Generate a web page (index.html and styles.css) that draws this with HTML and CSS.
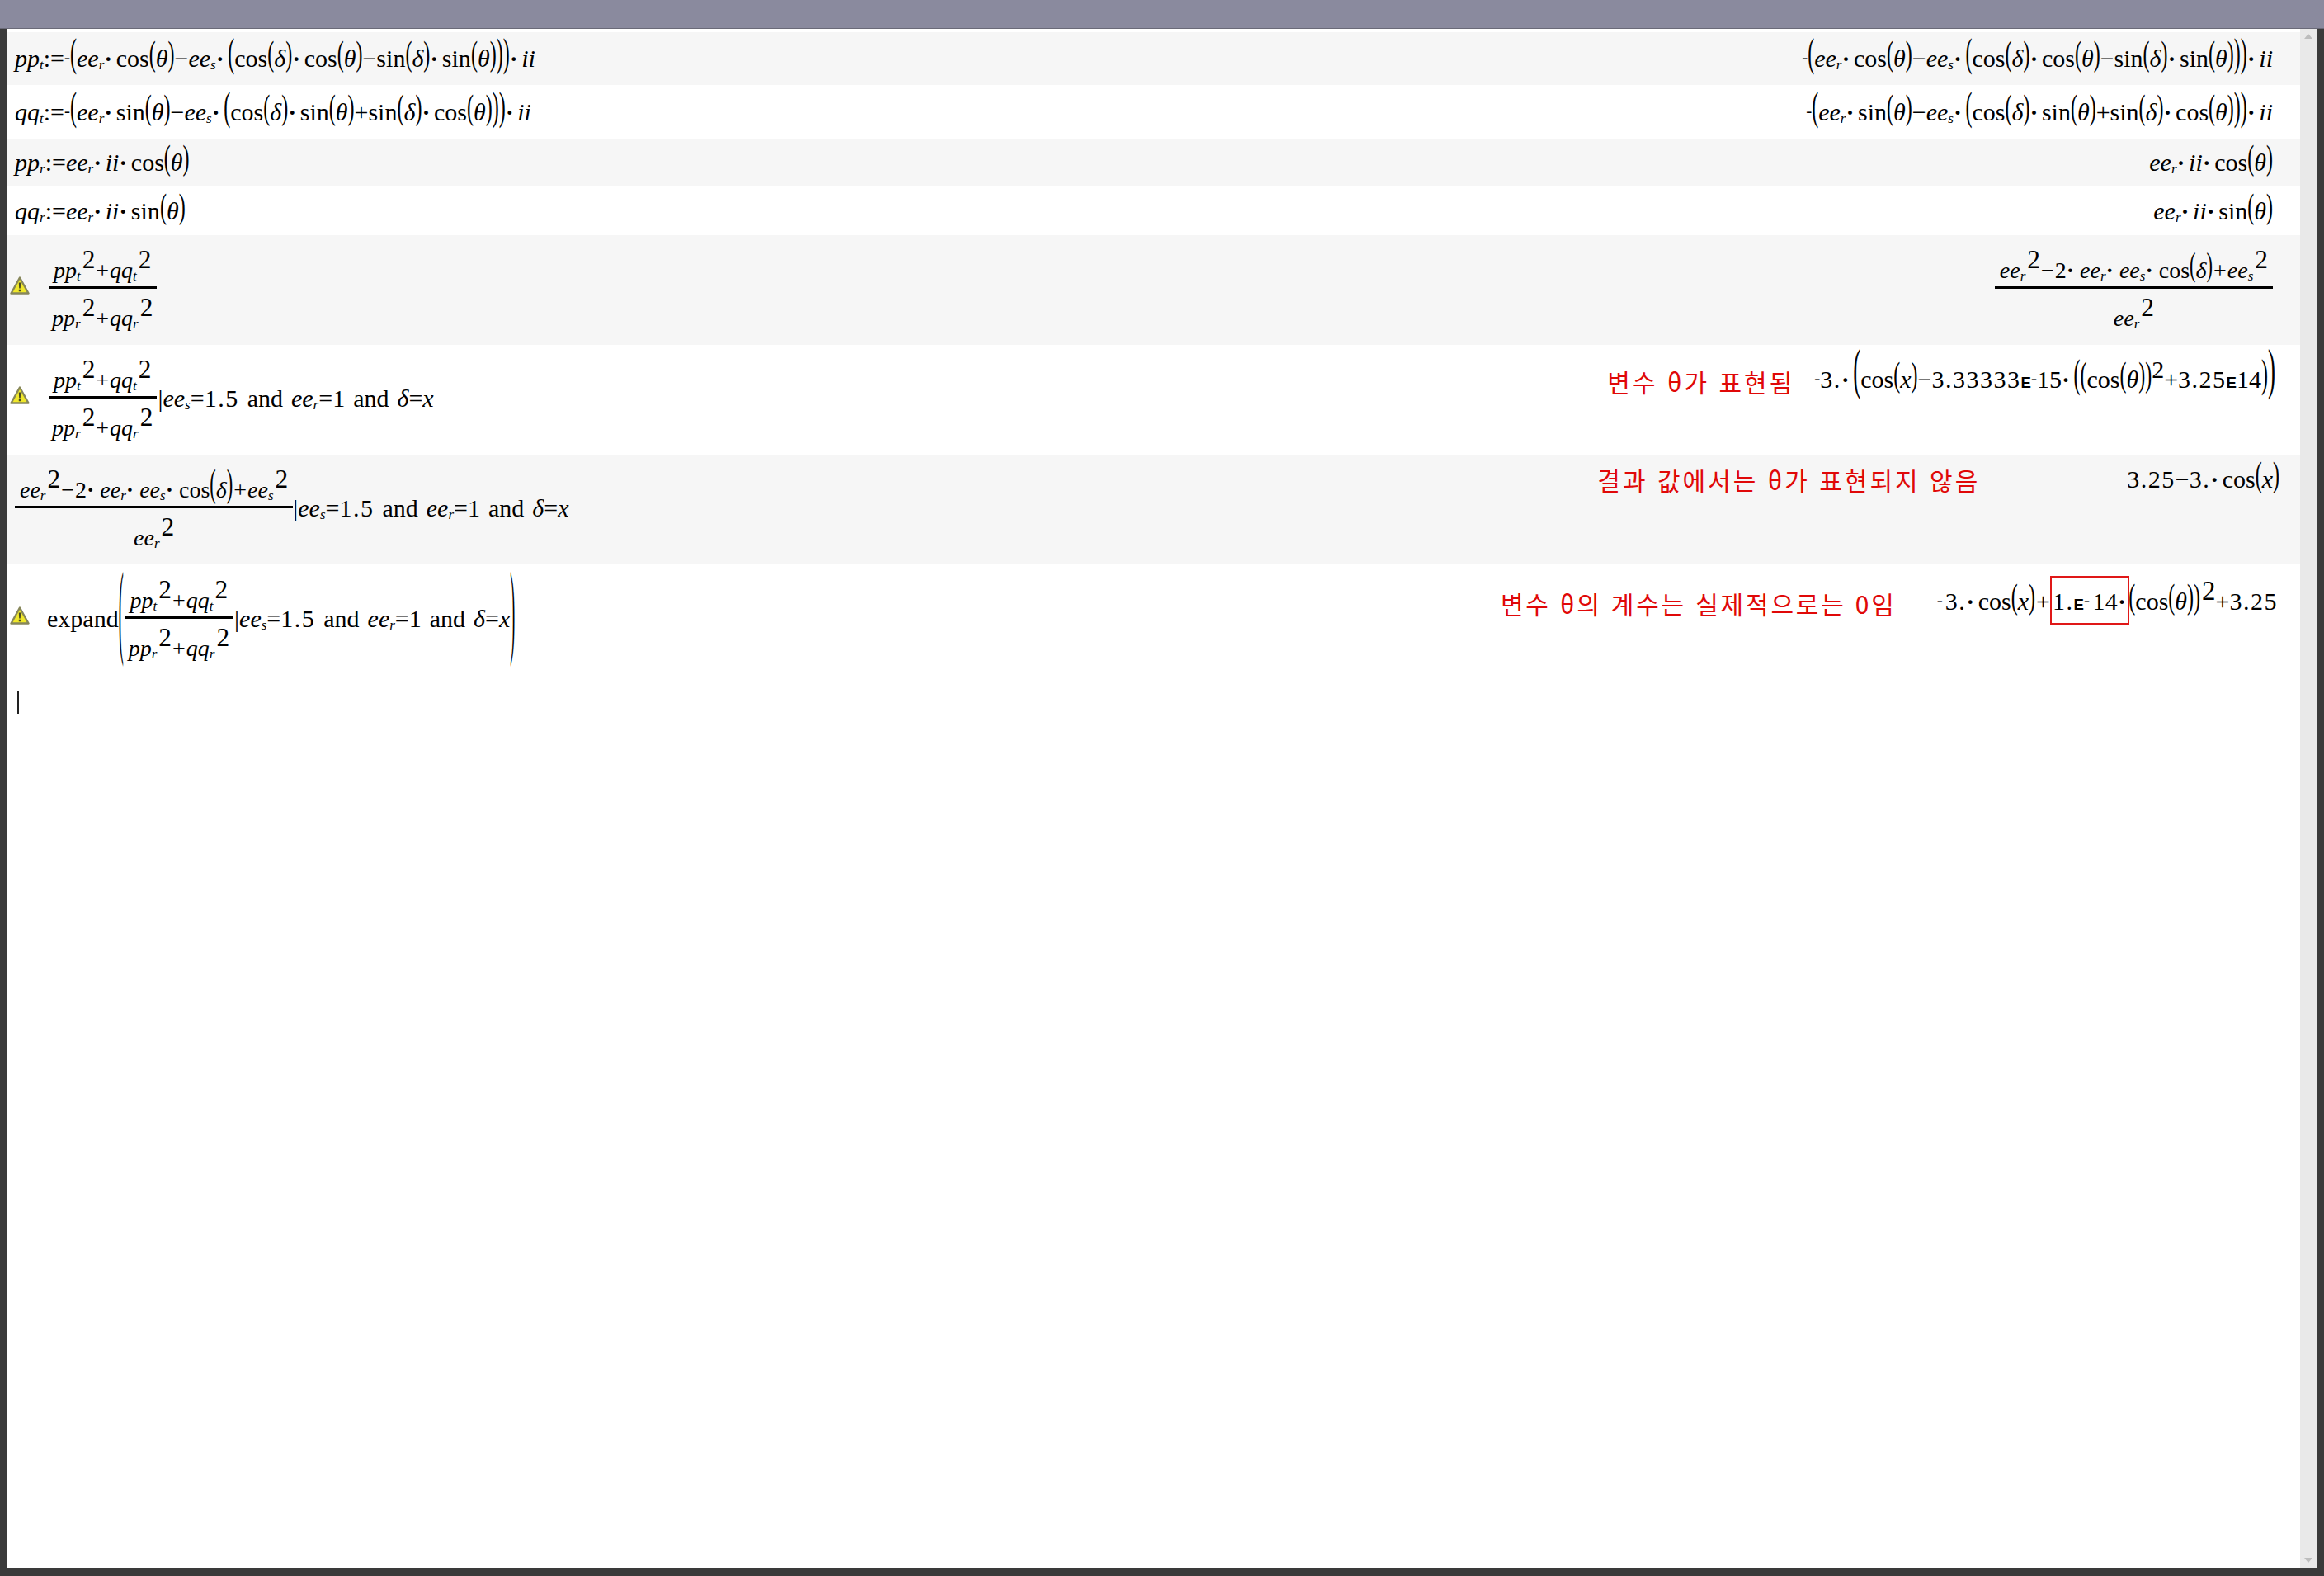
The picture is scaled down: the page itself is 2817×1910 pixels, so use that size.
FILE: index.html
```html
<!DOCTYPE html>
<html lang="ko">
<head>
<meta charset="utf-8">
<title>Calculator document</title>
<link rel="stylesheet" href="styles.css">
</head>
<body>
<div class="titlebar"></div>
<div class="main">
  <div class="doc">
    <div class="row alt h64">
      <div class="m"><i>pp</i><sub>t</sub>:=<sup class="neg">-</sup><span class="p p2">(</span><i>ee</i><sub>r</sub><b>·</b> cos<span class="p p1">(</span><i>θ</i><span class="p p1">)</span>−<i>ee</i><sub>s</sub><b>·</b> <span class="p p2">(</span>cos<span class="p p1">(</span><i>δ</i><span class="p p1">)</span><b>·</b> cos<span class="p p1">(</span><i>θ</i><span class="p p1">)</span>−sin<span class="p p1">(</span><i>δ</i><span class="p p1">)</span><b>·</b> sin<span class="p p1">(</span><i>θ</i><span class="p p1">)</span><span class="p p2">)</span><span class="p p2">)</span><b>·</b> <i>ii</i></div>
      <div class="m r"><sup class="neg">-</sup><span class="p p2">(</span><i>ee</i><sub>r</sub><b>·</b> cos<span class="p p1">(</span><i>θ</i><span class="p p1">)</span>−<i>ee</i><sub>s</sub><b>·</b> <span class="p p2">(</span>cos<span class="p p1">(</span><i>δ</i><span class="p p1">)</span><b>·</b> cos<span class="p p1">(</span><i>θ</i><span class="p p1">)</span>−sin<span class="p p1">(</span><i>δ</i><span class="p p1">)</span><b>·</b> sin<span class="p p1">(</span><i>θ</i><span class="p p1">)</span><span class="p p2">)</span><span class="p p2">)</span><b>·</b> <i>ii</i></div>
    </div>
    <div class="row h65">
      <div class="m"><i>qq</i><sub>t</sub>:=<sup class="neg">-</sup><span class="p p2">(</span><i>ee</i><sub>r</sub><b>·</b> sin<span class="p p1">(</span><i>θ</i><span class="p p1">)</span>−<i>ee</i><sub>s</sub><b>·</b> <span class="p p2">(</span>cos<span class="p p1">(</span><i>δ</i><span class="p p1">)</span><b>·</b> sin<span class="p p1">(</span><i>θ</i><span class="p p1">)</span>+sin<span class="p p1">(</span><i>δ</i><span class="p p1">)</span><b>·</b> cos<span class="p p1">(</span><i>θ</i><span class="p p1">)</span><span class="p p2">)</span><span class="p p2">)</span><b>·</b> <i>ii</i></div>
      <div class="m r"><sup class="neg">-</sup><span class="p p2">(</span><i>ee</i><sub>r</sub><b>·</b> sin<span class="p p1">(</span><i>θ</i><span class="p p1">)</span>−<i>ee</i><sub>s</sub><b>·</b> <span class="p p2">(</span>cos<span class="p p1">(</span><i>δ</i><span class="p p1">)</span><b>·</b> sin<span class="p p1">(</span><i>θ</i><span class="p p1">)</span>+sin<span class="p p1">(</span><i>δ</i><span class="p p1">)</span><b>·</b> cos<span class="p p1">(</span><i>θ</i><span class="p p1">)</span><span class="p p2">)</span><span class="p p2">)</span><b>·</b> <i>ii</i></div>
    </div>
    <div class="row alt h58">
      <div class="m"><i>pp</i><sub>r</sub>:=<i>ee</i><sub>r</sub><b>·</b> <i>ii</i><b>·</b> cos<span class="p p1">(</span><i>θ</i><span class="p p1">)</span></div>
      <div class="m r"><i>ee</i><sub>r</sub><b>·</b> <i>ii</i><b>·</b> cos<span class="p p1">(</span><i>θ</i><span class="p p1">)</span></div>
    </div>
    <div class="row h59">
      <div class="m"><i>qq</i><sub>r</sub>:=<i>ee</i><sub>r</sub><b>·</b> <i>ii</i><b>·</b> sin<span class="p p1">(</span><i>θ</i><span class="p p1">)</span></div>
      <div class="m r"><i>ee</i><sub>r</sub><b>·</b> <i>ii</i><b>·</b> sin<span class="p p1">(</span><i>θ</i><span class="p p1">)</span></div>
    </div>
    <div class="row alt h133 warned">
      <div class="left">
        <svg class="warn" viewBox="0 0 24 22"><path d="M12 1.5 L22.5 20.5 H1.5 Z" fill="#f0e82a" stroke="#87875a" stroke-width="2.4" stroke-linejoin="round"/><path d="M10.8 7.5h2.4l-.4 7h-1.6zM10.8 15.8h2.4v2.4h-2.4z" fill="#4a4a20"/></svg>
        <div class="m">
          <span class="frac"><span class="num"><i>pp</i><sub>t</sub><sup>2</sup><em>+</em><i>qq</i><sub>t</sub><sup>2</sup></span><span class="den"><i>pp</i><sub>r</sub><sup>2</sup><em>+</em><i>qq</i><sub>r</sub><sup>2</sup></span></span>
        </div>
      </div>
      <div class="m r">
        <span class="frac"><span class="num"><i>ee</i><sub>r</sub><sup>2</sup><em>−</em>2<b>·</b> <i>ee</i><sub>r</sub><b>·</b> <i>ee</i><sub>s</sub><b>·</b> cos<span class="p p1">(</span><i>δ</i><span class="p p1">)</span><em>+</em><i>ee</i><sub>s</sub><sup>2</sup></span><span class="den"><i>ee</i><sub>r</sub><sup>2</sup></span></span>
      </div>
    </div>
    <div class="row h134 warned shifted">
      <div class="left">
        <svg class="warn" viewBox="0 0 24 22"><path d="M12 1.5 L22.5 20.5 H1.5 Z" fill="#f0e82a" stroke="#87875a" stroke-width="2.4" stroke-linejoin="round"/><path d="M10.8 7.5h2.4l-.4 7h-1.6zM10.8 15.8h2.4v2.4h-2.4z" fill="#4a4a20"/></svg>
        <div class="m">
          <span class="frac"><span class="num"><i>pp</i><sub>t</sub><sup>2</sup><em>+</em><i>qq</i><sub>t</sub><sup>2</sup></span><span class="den"><i>pp</i><sub>r</sub><sup>2</sup><em>+</em><i>qq</i><sub>r</sub><sup>2</sup></span></span>|<i>ee</i><sub>s</sub>=<span class="n">1.5</span> and <i>ee</i><sub>r</sub>=1 and <i>δ</i>=<i>x</i>
        </div>
      </div>
      <div class="result pt-first">
        <span class="note">변수 θ가 표현됨</span>
        <div class="m"><sup class="neg">-</sup><span class="n">3.</span><b>·</b> <span class="p p3">(</span>cos<span class="p p1">(</span><i>x</i><span class="p p1">)</span>−<span class="n">3.33333</span><span class="e">E</span><sup class="neg">-</sup>15<b>·</b> <span class="p p2">(</span><span class="p p1">(</span>cos<span class="p p1">(</span><i>θ</i><span class="p p1">)</span><span class="p p1">)</span><sup>2</sup>+<span class="n">3.25</span><span class="e">E</span>14<span class="p p2">)</span><span class="p p3">)</span></div>
      </div>
    </div>
    <div class="row alt h132 shifted">
      <div class="m">
        <span class="frac"><span class="num"><i>ee</i><sub>r</sub><sup>2</sup><em>−</em>2<b>·</b> <i>ee</i><sub>r</sub><b>·</b> <i>ee</i><sub>s</sub><b>·</b> cos<span class="p p2">(</span><i>δ</i><span class="p p2">)</span><em>+</em><i>ee</i><sub>s</sub><sup>2</sup></span><span class="den"><i>ee</i><sub>r</sub><sup>2</sup></span></span>|<i>ee</i><sub>s</sub>=<span class="n">1.5</span> and <i>ee</i><sub>r</sub>=1 and <i>δ</i>=<i>x</i>
      </div>
      <div class="result pt-second">
        <span class="note">결과 값에서는 θ가 표현되지 않음</span>
        <div class="m gap-wide"><span class="n">3.25</span>−<span class="n">3.</span><b>·</b> cos<span class="p p1">(</span><i>x</i><span class="p p1">)</span></div>
      </div>
    </div>
    <div class="row h131 warned">
      <div class="left">
        <svg class="warn" viewBox="0 0 24 22"><path d="M12 1.5 L22.5 20.5 H1.5 Z" fill="#f0e82a" stroke="#87875a" stroke-width="2.4" stroke-linejoin="round"/><path d="M10.8 7.5h2.4l-.4 7h-1.6zM10.8 15.8h2.4v2.4h-2.4z" fill="#4a4a20"/></svg>
        <div class="m">expand<span class="p p4">(</span><span class="frac"><span class="num"><i>pp</i><sub>t</sub><sup>2</sup><em>+</em><i>qq</i><sub>t</sub><sup>2</sup></span><span class="den"><i>pp</i><sub>r</sub><sup>2</sup><em>+</em><i>qq</i><sub>r</sub><sup>2</sup></span></span>|<i>ee</i><sub>s</sub>=<span class="n">1.5</span> and <i>ee</i><sub>r</sub>=1 and <i>δ</i>=<i>x</i><span class="p p4">)</span></div>
      </div>
      <div class="result pt-third">
        <span class="note tight">변수 θ의 계수는 실제적으로는 0임</span>
        <div class="m gap-mid"><sup class="neg">-</sup><span class="n">3.</span><b>·</b> cos<span class="p p1">(</span><i>x</i><span class="p p1">)</span><em>+</em><span class="boxed"><span class="n">1.</span><span class="e">E</span><sup class="neg">-</sup>14<b>·</b></span><span class="p p1">(</span>cos<span class="p p1">(</span><i>θ</i><span class="p p1">)</span><span class="p p1">)</span><sup>2</sup>+<span class="n">3.25</span></div>
      </div>
    </div>
    <div class="cursor"></div>
  </div>
  <div class="scrollbar">
    <span class="arrow up"></span>
    <span class="arrow down"></span>
  </div>
</div>
</body>
</html>
```

FILE: styles.css
```css
* { box-sizing: border-box; }
html, body { margin: 0; height: 100%; }
body {
  width: 2817px;
  height: 1910px;
  overflow: hidden;
  background: #3a3a3a;
  display: flex;
  flex-direction: column;
}
.titlebar {
  height: 35px;
  flex: none;
  background: #8a8a9e;
  border-bottom: 1px solid #6a6a78;
}
.main {
  height: 1865px;
  flex: none;
  margin: 0 9px 10px;
  display: flex;
}
.doc {
  flex: 1;
  min-width: 0;
  background: #fff;
  padding-top: 4px;
}
.scrollbar {
  width: 20px;
  flex: none;
  background: #e9e9e9;
  display: flex;
  flex-direction: column;
  justify-content: space-between;
  align-items: center;
  padding: 6px 0;
}
.arrow {
  width: 0;
  height: 0;
  border-left: 5px solid transparent;
  border-right: 5px solid transparent;
}
.arrow.up { border-bottom: 6px solid #bdbdbd; }
.arrow.down { border-top: 6px solid #bdbdbd; }

.row {
  display: flex;
  justify-content: space-between;
  align-items: center;
  padding: 0 33px 0 9px;
}
.alt { background: #f6f6f6; }
.h64 { height: 64px; }
.h65 { height: 65px; }
.h58 { height: 58px; }
.h59 { height: 59px; }
.h133 { height: 133px; padding-top: 2px; }
.h134 { height: 134px; }
.h132 { height: 132px; }
.h131 { height: 131px; padding-top: 7px; }
.shifted { padding-top: 2px; }
.warned { padding-left: 3px; }
.left {
  display: flex;
  align-items: center;
  gap: 21px;
}
.warn {
  width: 24px;
  height: 22px;
  flex: none;
  margin-bottom: 14px;
}
.result {
  display: flex;
  align-self: flex-start;
  justify-content: flex-end;
  align-items: center;
  margin-right: -3px;
}
.pt-first { padding-top: 20px; }
.pt-second { padding-top: 7px; margin-right: -8px; }
.pt-third { padding-top: 18px; margin-right: -6px; }

.m {
  font-family: "Liberation Serif", "Times New Roman", serif;
  font-size: 30px;
  line-height: 40px;
  word-spacing: 2.5px;
  color: #000;
  white-space: nowrap;
}
.m i { font-style: italic; }
.m em { font-style: normal; margin: 0 1px; }
.m b { font-weight: 700; margin-right: -5.5px; }
.m sub {
  font-size: 17px;
  font-style: italic;
  line-height: 0;
  vertical-align: -3px;
}
.m sup {
  font-size: 1em;
  line-height: 0;
  vertical-align: 12px;
}
.m sup.neg {
  font-size: 0.7em;
  vertical-align: 5px;
}
.n { letter-spacing: 1.5px; }
.e {
  font-family: "Liberation Sans", Arial, sans-serif;
  font-size: 0.62em;
  font-weight: 700;
}
.p {
  display: inline-block;
  line-height: 1;
  font-weight: 400;
  font-style: normal;
}
.p1 { font-size: 0.8em; transform: translateY(-8px) scaleY(1.8); }
.p2 { font-size: 0.8em; transform: translateY(-9px) scaleY(2.05); }
.p3 { font-size: 0.9em; transform: translateY(-13px) scaleY(2.5); }
.p4 { font-size: 0.6em; transform: translateY(-15px) scaleY(7); }

.frac {
  display: inline-flex;
  flex-direction: column;
  align-items: center;
  vertical-align: middle;
  margin-top: 8px;
  font-size: 28px;
  line-height: 38px;
}
.frac sup { font-size: 1.12em; margin-left: 2px; }
.m .frac b { margin-right: -2.5px; }
.num {
  display: block;
  padding: 0 6px 0;
  border-bottom: 3px solid #000;
}
.den {
  display: block;
  padding: 17px 6px 0;
}
.note {
  font-family: "Noto Sans CJK KR", "Noto Sans", sans-serif;
  font-size: 30px;
  letter-spacing: 3px;
  line-height: 36px;
  color: #e00808;
  white-space: pre;
}
.note.tight { letter-spacing: 2.8px; }
.result .m { margin-left: 24px; }
.result .gap-wide { margin-left: 178px; }
.result .gap-mid { margin-left: 49px; }
.gap-mid sup { font-size: 1.1em; margin-left: 2px; }
.gap-mid sup.neg { margin: 0 3px 0 0; }
.boxed {
  position: relative;
  padding: 0 3px 0 2px;
  letter-spacing: 0.3px;
}
.m .boxed b { margin-right: 0; }
.boxed::after {
  content: "";
  position: absolute;
  left: -1px;
  right: -1px;
  top: -14px;
  bottom: -12px;
  border: 2px solid #e01818;
}
.cursor {
  width: 2px;
  height: 28px;
  margin: 22px 0 0 12px;
  background: #222;
}
```
